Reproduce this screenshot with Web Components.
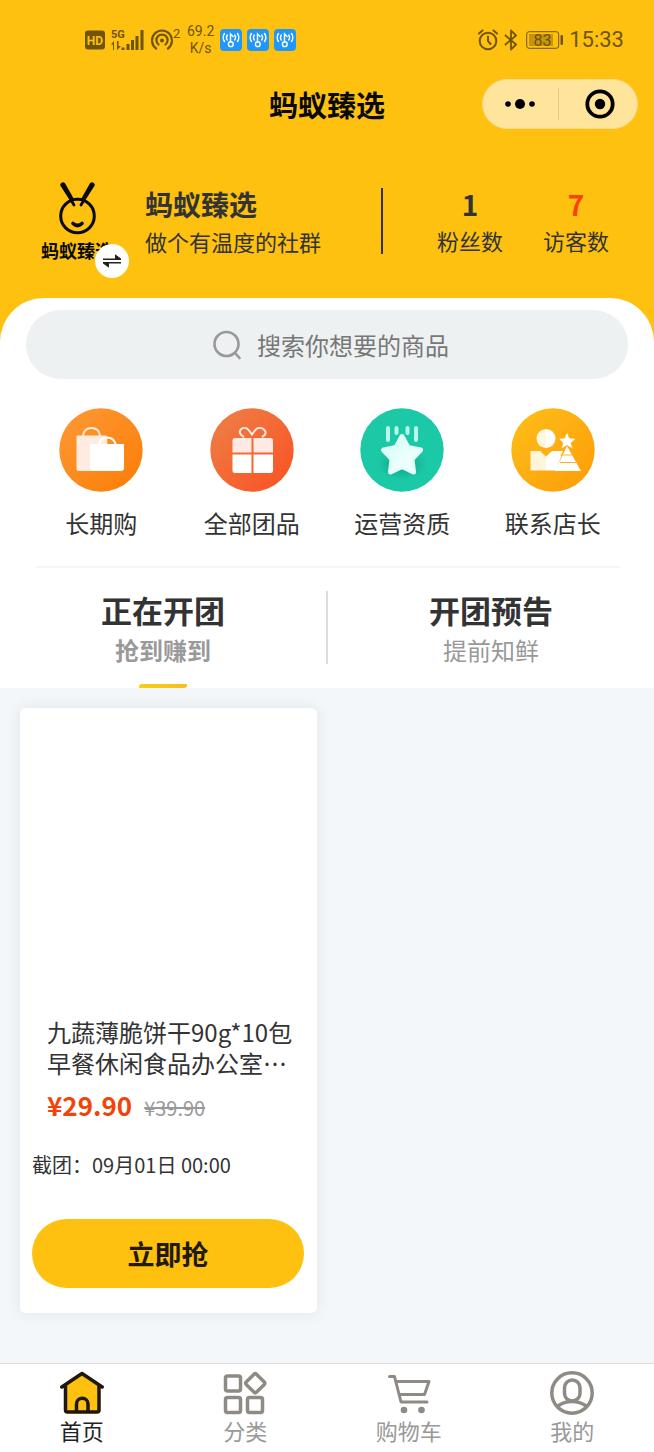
<!DOCTYPE html>
<html lang="zh-CN">
<head>
<meta charset="utf-8">
<meta name="viewport" content="width=device-width, initial-scale=1">
<title>蚂蚁臻选</title>
<style>
  html, body { margin: 0; }
  body {
    font-family: "Noto Sans CJK SC", sans-serif;
    color: #333;
    background: #f4f7f9;
    --brand: #fec10f;
    --muted: #999;
  }
</style>
</head>
<body>
<shop-app></shop-app>
<script>
const define = (name, html, setup) => {
  const template = document.createElement('template');
  template.innerHTML = `<style>
    *, *::before, *::after { box-sizing: border-box; }
    :host { display: block; box-sizing: border-box; }
    button, input { font: inherit; color: inherit; border: 0; padding: 0; margin: 0; background: none; }
    a { color: inherit; text-decoration: none; }
    svg { display: block; flex: none; }
    p, h1, h2, h3 { margin: 0; }
  </style>` + html;
  customElements.define(name, class extends HTMLElement {
    constructor() {
      super();
      this.attachShadow({ mode: 'open' }).append(template.content.cloneNode(true));
      if (setup) setup(this.shadowRoot, this);
    }
  });
};

/* Phone status row */
define('wifi-key', `
  <style>:host { width: 22px; height: 22px; }</style>
  <svg width="22" height="22" viewBox="0 0 22 22" fill="none" stroke="#fff" stroke-width="1.4" stroke-linecap="round">
    <rect width="22" height="22" rx="4" fill="#2196fb" stroke="none"/>
    <path d="M4.500 4.500Q1.800 8.500 4.500 12.500M7.300 6Q5.600 8.500 7.300 11M17.500 4.500Q20.200 8.500 17.500 12.500M14.700 6Q16.400 8.500 14.700 11"/>
    <path d="M10.500 13V5L13 7.500"/><circle cx="10.800" cy="15.200" r="2.400"/>
  </svg>`);

define('status-bar', `
  <style>
    :host { display: flex; align-items: center; justify-content: space-between; height: 79px; padding: 0 30px 0 85px; color: #70540a; font-family: Roboto, sans-serif; }
    .group { display: flex; align-items: center; }
    .left { gap: 6px; }
    .right { gap: 6px; }
    .speed { font-size: 14px; line-height: 17px; text-align: center; }
    .apps { display: flex; gap: 5px; }
    time { font-size: 22px; line-height: 28px; }
    svg text { font-family: Roboto, sans-serif; }
  </style>
  <div class="group left">
    <svg width="20" height="20" viewBox="0 0 20 20"><rect y="0.500" width="20" height="19" rx="3" fill="#70540a"/><text x="10" y="14.500" text-anchor="middle" font-size="12" font-weight="700" fill="#fec10f">HD</text></svg>
    <svg width="34" height="24" viewBox="0 -1 34 24" fill="#70540a">
      <text x="0" y="9" font-size="11" font-weight="700">5G</text>
      <path d="M3 21V12L0 15.500h2V21zM6 12v9l4-4H7.500V12zM10.500 18.500h3V21h-3zM15.500 15h3v6h-3zM20 11h3v10h-3zM24.500 7h3v14h-3zM29.500 1h3v20h-3z"/>
    </svg>
    <svg width="30" height="34" viewBox="0 -5 30 34" fill="none" stroke="#70540a" stroke-width="2.200" stroke-linecap="round">
      <path d="M5 20.500A10 10 0 1 1 17 20.500M7.500 16.500A5.600 5.600 0 1 1 14.500 16.500"/><circle cx="11" cy="12.500" r="2" fill="#70540a" stroke="none"/>
      <text x="22" y="10" font-size="13" fill="#70540a" stroke="none">2</text>
    </svg>
    <div class="speed">69.2<br>K/s</div>
    <div class="apps"><wifi-key></wifi-key><wifi-key></wifi-key><wifi-key></wifi-key></div>
  </div>
  <div class="group right">
    <svg width="20" height="22" viewBox="0 0 20 22" fill="none" stroke="#70540a" stroke-width="2" stroke-linecap="round">
      <circle cx="10" cy="12" r="8.300"/><path d="M10 7.500V12l2.500 3M1 4.500L4.500 1.500M19 4.500L15.500 1.500"/>
    </svg>
    <svg width="16" height="22" viewBox="0 0 16 22" fill="none" stroke="#70540a" stroke-width="1.800" stroke-linejoin="round" stroke-linecap="round">
      <path d="M1.500 6.500L12 15.500L7 20.500V1.500L12 6.500L1.500 15.500"/>
    </svg>
    <svg width="37" height="20" viewBox="0 0 37 20">
      <rect x="0.700" y="1.700" width="32" height="16.600" rx="2.500" fill="none" stroke="#70540a" stroke-width="1"/>
      <rect x="3" y="4" width="24" height="12" fill="#c59510"/>
      <rect x="34.500" y="5" width="2.500" height="10" rx="1" fill="#70540a"/>
      <text x="16.500" y="15.500" text-anchor="middle" font-size="16" fill="#70540a">83</text>
    </svg>
    <time>15:33</time>
  </div>`);

/* Mini-programme title bar with its capsule */
define('nav-bar', `
  <style>
    :host { display: grid; grid-template-columns: 1fr auto 1fr; align-items: center; height: 50px; padding: 0 16px; color: #0a0a0a; }
    h1 { grid-column: 2; font-size: 29px; line-height: 40px; font-weight: 700; }
    .capsule { justify-self: end; display: flex; align-items: center; width: 156px; height: 50px; border-radius: 25px; background: #ffe59c; border: 1px solid #f3d98c; }
    button { flex: 1; display: grid; place-items: center; height: 32px; }
    button + button { border-left: 1px solid #e3cd8c; padding-left: 4px; }
  </style>
  <h1>蚂蚁臻选</h1>
  <div class="capsule">
    <button aria-label="更多"><svg width="32" height="12" viewBox="0 0 32 12"><circle cx="4" cy="6" r="2.800"/><circle cx="16" cy="6" r="5"/><circle cx="28" cy="6" r="2.800"/></svg></button>
    <button aria-label="关闭"><svg width="30" height="30" viewBox="0 0 30 30"><circle cx="15" cy="15" r="12.700" fill="none" stroke="#000" stroke-width="3.800"/><circle cx="15" cy="15" r="5.200"/></svg></button>
  </div>`);

define('shop-logo', `
  <style>
    :host { position: relative; display: flex; flex-direction: column; align-items: center; width: 72px; color: #0a0a0a; }
    .name { font-size: 18px; line-height: 28px; font-weight: 700; white-space: nowrap; }
    button { position: absolute; right: -16px; bottom: -14px; width: 34px; height: 34px; border-radius: 50%; background: #fff; display: grid; place-items: center; }
  </style>
  <svg width="46" height="56" viewBox="0 0 46 56" fill="none" stroke="#0a0a0a" stroke-linecap="round">
    <circle cx="23.500" cy="36" r="16.800" stroke-width="3"/>
    <path d="M17 20L20 25M30 20L27 25" stroke-width="2.800"/>
    <path d="M6 5Q7 1.500 10 2.500Q11.500 3 12 5L20.500 20L16.500 21.500ZM41 5Q40 1.500 37 2.500Q35.500 3 35 5L26.500 20L30.500 21.500Z" fill="#0a0a0a" stroke="none"/>
    <path d="M19 43.500Q23.500 47.500 28 43.500" stroke-width="3.600"/>
  </svg>
  <span class="name">蚂蚁臻选</span>
  <button aria-label="切换店铺"><svg width="20" height="16" viewBox="0 0 20 16" fill="#222"><path d="M1 5.500H13V1.200L19 5.500V7H1zM19 10.500H7V14.800L1 10.500V9H19z"/></svg></button>`);

define('stat-item', `
  <style>
    :host { display: flex; flex-direction: column; align-items: center; }
    b { font-size: 28px; line-height: 40px; color: var(--stat-color, #333); }
    span { font-size: 22px; line-height: 32px; }
  </style>
  <b><slot name="value"></slot></b><span><slot></slot></span>`);

define('shop-profile', `
  <style>
    :host { display: flex; align-items: flex-start; padding: 51px 45px 34px 41px; }
    .about { margin: 4px 0 0 32px; }
    h2 { font-size: 28px; line-height: 40px; font-weight: 700; }
    p { font-size: 22px; line-height: 34px; }
    .rule { width: 2px; height: 66px; margin: 8px 54px 0 auto; background: #333; }
    .stats { display: flex; gap: 40px; margin-top: 4px; }
    .hot { --stat-color: #fa4208; }
  </style>
  <shop-logo></shop-logo>
  <div class="about"><h2>蚂蚁臻选</h2><p>做个有温度的社群</p></div>
  <span class="rule"></span>
  <div class="stats">
    <stat-item><span slot="value">1</span>粉丝数</stat-item>
    <stat-item class="hot"><span slot="value">7</span>访客数</stat-item>
  </div>`);

define('search-box', `
  <style>
    :host { padding: 12px 26px 0; }
    label { display: flex; align-items: center; justify-content: center; gap: 16px; height: 69px; padding-left: 8px; border-radius: 35px; background: #eef1f2; }
    input { width: 8em; height: 36px; font-size: 24px; outline: 0; }
    input::placeholder { color: #777; opacity: 1; }
  </style>
  <label>
    <svg width="28" height="30" viewBox="0 0 28 30" fill="none" stroke="#999" stroke-width="2.600" stroke-linecap="round"><circle cx="13.500" cy="14" r="12"/><path d="M22 23L26.500 28"/></svg>
    <input type="text" placeholder="搜索你想要的商品" aria-label="搜索商品">
  </label>`);

define('quick-link', `
  <style>
    a { display: flex; flex-direction: column; align-items: center; gap: 13px; font-size: 24px; line-height: 36px; }
  </style>
  <a href="#"><slot name="icon"></slot><span><slot></slot></span></a>`);

define('quick-links', `
  <style>
    :host { display: grid; grid-template-columns: repeat(4, 1fr); padding: 29px 26px 25px; }
  </style>
  <quick-link><svg slot="icon" width="84" height="84" viewBox="0 0 84 84">
    <defs><linearGradient id="g1" x1="0" y1="0" x2="1" y2="1"><stop stop-color="#fd9a35"/><stop offset="1" stop-color="#fb7c06"/></linearGradient></defs>
    <circle cx="42" cy="42" r="41.700" fill="url(#g1)"/>
    <path d="M24 28Q25 20 32.500 20T41 28" fill="none" stroke="#ffe9da" stroke-width="2"/>
    <path d="M18 27.500H46Q48.500 27.500 48.500 30V63H20Q17.500 63 17.500 60.500V28z" fill="#ffebdf"/>
    <path d="M48.500 31Q54 31 56 36H48.500z" fill="#fb8c20"/>
    <path d="M40 37Q41 29.500 48 29.500T57 37" fill="none" stroke="#fff" stroke-width="2"/>
    <path d="M31 36H65V60Q65 63 62 63H34Q31 63 31 60z" fill="#fff"/>
  </svg>长期购</quick-link>
  <quick-link><svg slot="icon" width="84" height="84" viewBox="0 0 84 84">
    <defs><linearGradient id="g2" x1="0" y1="0" x2="1" y2="1"><stop stop-color="#ee8147"/><stop offset="1" stop-color="#fa5022"/></linearGradient></defs>
    <circle cx="42" cy="42" r="41.700" fill="url(#g2)"/>
    <path d="M34 29C26 25 31 18 37 20.500Q39 22 42 26.500Q45 22 47 20.500C53 18 60 25 52 29" fill="none" stroke="#ffeae4" stroke-width="2"/>
    <path d="M25 30H41.500V44.500H22.500V32.500Q22.500 30 25 30zM43.500 30H60.500Q63 30 63 32.500V44.500H43.500z" fill="#ffeae3"/>
    <path d="M22.500 46.500H41.500V65H25Q22.500 65 22.500 62.500zM43.500 46.500H63V62.500Q63 65 60.500 65H43.500z" fill="#fff"/>
  </svg>全部团品</quick-link>
  <quick-link><svg slot="icon" width="84" height="84" viewBox="0 0 84 84">
    <defs>
      <linearGradient id="g3" x1="0" y1="0" x2="1" y2="1"><stop stop-color="#c9fff1"/><stop offset="0.600" stop-color="#edfffc"/></linearGradient>
      <radialGradient id="g5"><stop stop-color="#109f84"/><stop offset="1" stop-color="#1bc9a7"/></radialGradient>
    </defs>
    <circle cx="42" cy="42" r="41.700" fill="#1bc9a7"/>
    <ellipse cx="42" cy="56" rx="25" ry="16" fill="url(#g5)"/>
    <path d="M28 20V32M56 20V32M36.500 20V25M47.500 20V25" stroke="#baf8e8" stroke-width="4" stroke-linecap="round"/>
    <path d="M42 28.500L48 39.500L60.500 42L52 51L53.500 64L42 58.500L30.500 64L32 51L23.500 42L36 39.500z" fill="#e2fff8" stroke="#e2fff8" stroke-width="5" stroke-linejoin="round"/>
    <path d="M42 30L48 40L60 42L51.500 51L53 63L42 58L31 63L32.500 51L24 42L36 40z" fill="url(#g3)"/>
  </svg>运营资质</quick-link>
  <quick-link><svg slot="icon" width="84" height="84" viewBox="0 0 84 84">
    <defs><linearGradient id="g4" x1="0" y1="0" x2="1" y2="1"><stop stop-color="#fdc019"/><stop offset="1" stop-color="#fd9b08"/></linearGradient></defs>
    <circle cx="42" cy="42" r="41.700" fill="url(#g4)"/>
    <path d="M35 21A9.500 9.500 0 0 0 35 40z" fill="#fff7df"/><path d="M35 21A9.500 9.500 0 0 1 35 40z" fill="#fff"/>
    <path d="M20 43H29L35 48.500V62.500H19.500V43z" fill="#fff5da"/><path d="M35 48.500L41 43H52L45 62.500H35z" fill="#fff"/>
    <path d="M56 38L70 63H44z" fill="#fff"/>
    <path d="M53 43L50 48M51 47H61M49 54.500H65" stroke="#fdb325" stroke-width="1.200" fill="none"/>
    <path d="M56 24L58.500 30L65 30.500L60 35L62 41L56 37.500L50 41L52 35L47.500 30.500L53.500 30z" fill="#fff" stroke="#fdb01b" stroke-width="0.800"/>
  </svg>联系店长</quick-link>`);

define('group-tabs', `
  <style>
    .line { height: 2px; margin: 0 34px 0 36px; background: #f5f5f5; }
    .tabs { display: grid; grid-template-columns: 1fr 2px 1fr; height: 120px; }
    .sep { background: #ddd; height: 73px; margin-top: 23px; }
    button { display: flex; flex-direction: column; align-items: center; padding-top: 19px; }
    strong { font-size: 31px; line-height: 46px; }
    small { font-size: 24px; line-height: 34px; color: var(--muted); }
    [aria-selected=true] small { font-weight: 700; }
    [aria-selected=true]::after { content: ""; width: 48px; height: 4px; margin-top: auto; border-radius: 3px 0; background: linear-gradient(90deg, #f5d014, #fbbb20); }
  </style>
  <div class="line"></div>
  <div class="tabs" role="tablist">
    <button role="tab" aria-selected="true"><strong>正在开团</strong><small>抢到赚到</small></button>
    <span class="sep"></span>
    <button role="tab" aria-selected="false"><strong>开团预告</strong><small>提前知鲜</small></button>
  </div>`, root => {
    const tabs = root.querySelectorAll('button');
    tabs.forEach(tab => tab.addEventListener('click', () =>
      tabs.forEach(t => t.setAttribute('aria-selected', t === tab))));
  });

define('product-card', `
  <style>
    :host { display: flex; flex-direction: column; border-radius: 6px; background: #fff; box-shadow: 0 0 16px rgba(0, 0, 0, 0.080); padding-bottom: 25px; }
    .photo { aspect-ratio: 1; }
    h3 { padding: 11px 20px 0 27px; font-size: 24px; line-height: 31px; font-weight: 400; }
    .price { display: flex; align-items: baseline; gap: 12px; padding: 6px 27px 0; line-height: 42px; }
    .now { font-size: 26px; font-weight: 700; color: #f24408; }
    .was { font-size: 20px; color: var(--muted); }
    .end { padding: 21px 13px 0 12px; font-size: 20px; line-height: 30px; }
    button { margin: 39px 13px 0 12px; height: 69px; border-radius: 35px; background: var(--brand); color: #22190a; font-size: 27px; font-weight: 700; }
  </style>
  <div class="photo"></div>
  <h3><slot name="title"></slot></h3>
  <div class="price"><span class="now"><slot name="price"></slot></span><s class="was"><slot name="original"></slot></s></div>
  <p class="end">截团：<slot name="deadline"></slot></p>
  <button>立即抢</button>`);

define('tab-item', `
  <style>
    a { display: flex; flex-direction: column; align-items: center; padding-top: 7px; font-size: 22px; line-height: 31px; color: #999; }
    :host([active]) a { color: #222; }
  </style>
  <a href="#"><slot name="icon"></slot><span><slot></slot></span></a>`);

define('tab-bar', `
  <style>
    :host { position: sticky; bottom: 0; display: grid; grid-template-columns: repeat(4, 1fr); height: 89px; background: #fff; border-top: 1px solid #d9d9d9; }
    svg { fill: none; stroke: #8f8b84; stroke-width: 3.500; stroke-linecap: round; stroke-linejoin: round; }
  </style>
  <tab-item active><svg slot="icon" width="44" height="44" viewBox="0 0 44 44" style="stroke:#1f1708">
    <path d="M5 14V39Q5 41 7 41H37Q39 41 39 39V14L22 2.500z" fill="#fec10f" stroke="none"/>
    <path d="M1.800 16L22 2.500L42.200 16M5.500 15V39Q5.500 41 7.500 41H37Q39 41 39 39V15M16.500 41V33A5.500 5.500 0 0 1 28 33V41"/>
  </svg>首页</tab-item>
  <tab-item><svg slot="icon" width="44" height="44" viewBox="0 0 44 44">
    <rect x="2.500" y="5" width="15" height="15" rx="2"/><rect x="2.500" y="26.500" width="15" height="15" rx="2"/><rect x="24.500" y="26.500" width="15" height="15" rx="2"/>
    <rect x="25" y="5" width="14.500" height="14.500" rx="2" transform="rotate(45 32.250 12.250)"/>
  </svg>分类</tab-item>
  <tab-item><svg slot="icon" width="44" height="44" viewBox="0 0 44 44">
    <path d="M2.500 5.500H7.500L14 31H40M9 10.500H42L37.500 23.500H12" style="stroke-width:3"/>
    <g fill="#8f8b84" stroke="none"><circle cx="17" cy="39" r="3.300"/><circle cx="34.500" cy="39" r="3.300"/></g>
  </svg>购物车</tab-item>
  <tab-item><svg slot="icon" width="44" height="44" viewBox="0 0 44 44">
    <circle cx="22" cy="22" r="20.200"/><rect x="14.500" y="9" width="15.500" height="21" rx="7.750"/><path d="M8 35Q14 30.500 22 30.500T36 35"/>
  </svg>我的</tab-item>`);

define('shop-app', `
  <style>
    :host { display: flex; flex-direction: column; min-height: 100vh; }
    header { background: var(--brand); padding-bottom: 42px; }
    .sheet { margin-top: -42px; border-radius: 44px 44px 0 0; background: #fff; }
    main { flex: 1; display: grid; grid-template-columns: repeat(2, 1fr); align-items: start; gap: 20px; padding: 20px; }
  </style>
  <header><status-bar></status-bar><nav-bar></nav-bar><shop-profile></shop-profile></header>
  <section class="sheet"><search-box></search-box><quick-links></quick-links><group-tabs></group-tabs></section>
  <main>
    <product-card>
      <span slot="title">九蔬薄脆饼干90g*10包早餐休闲食品办公室…</span>
      <span slot="price">¥29.90</span>
      <span slot="original">¥39.90</span>
      <span slot="deadline">09月01日 00:00</span>
    </product-card>
  </main>
  <tab-bar></tab-bar>`);
</script>
</body>
</html>
